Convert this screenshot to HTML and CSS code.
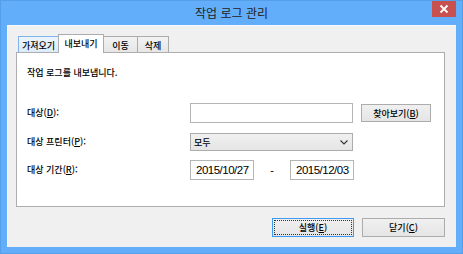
FILE: index.html
```html
<!DOCTYPE html>
<html lang="ko">
<head>
<meta charset="utf-8">
<title>작업 로그 관리</title>
<link rel="stylesheet" href="styles.css">
</head>
<body>
<div class="window">
  <div class="titlebar">
    <span class="title">작업 로그 관리</span>
    <div class="close"><svg width="10" height="10" viewBox="0 0 10 10"><path d="M1.5 1.5 L8.5 8.5 M8.5 1.5 L1.5 8.5" stroke="#fff" stroke-width="1.8" fill="none"/></svg></div>
  </div>
  <div class="client">
    <div class="tabs">
      <div class="tab hover t1">가져오기</div>
      <div class="tab sel t2">내보내기</div>
      <div class="tab t3">이동</div>
      <div class="tab t4">삭제</div>
    </div>
    <div class="panel">
      <div class="intro">작업 로그를 내보냅니다.</div>
      <div class="row row-d">
        <div class="label">대상(<u>D</u>):</div>
        <div class="field">
          <div class="textbox wide"></div>
          <div class="btn browse">찾아보기(<u>B</u>)</div>
        </div>
      </div>
      <div class="row row-p">
        <div class="label">대상 프린터(<u>P</u>):</div>
        <div class="field">
          <div class="combo"><span>모두</span><svg width="8" height="5" viewBox="0 0 8 5"><path d="M0.5 0.5 L4 4 L7.5 0.5" stroke="#333" stroke-width="1.1" fill="none"/></svg></div>
        </div>
      </div>
      <div class="row row-r">
        <div class="label">대상 기간(<u>R</u>):</div>
        <div class="field">
          <div class="textbox date">2015/10/27</div>
          <div class="dash">-</div>
          <div class="textbox date">2015/12/03</div>
        </div>
      </div>
    </div>
    <div class="actions">
      <div class="btn action default">실행(<u>E</u>)</div>
      <div class="btn action">닫기(<u>C</u>)</div>
    </div>
  </div>
</div>
</body>
</html>
```

FILE: styles.css
```css
* { box-sizing: border-box; }
html, body { margin: 0; padding: 0; background: #fff; }
body {
  font-family: "Noto Sans CJK KR", "Noto Sans", sans-serif;
  font-size: 9px;
  font-weight: 500;
  color: #000;
}
.window {
  width: 463px;
  height: 254px;
  background: #62aefa;
  box-shadow: inset 0 0 0 1px #559fe8;
  display: flex;
  flex-direction: column;
}
.titlebar {
  height: 25px;
  display: grid;
  grid-template-columns: 1fr auto 1fr;
}
.title {
  grid-column: 2;
  font-size: 12px;
  font-weight: 400;
  line-height: 25px;
  color: #222;
}
.close {
  grid-column: 3;
  justify-self: end;
  margin-top: 1px;
  margin-right: 7px;
  width: 24px;
  height: 16px;
  background: #c8504f;
  display: flex;
  align-items: center;
  justify-content: center;
}
.client {
  margin: 0 7px 7px 7px;
  flex: 1;
  background: #f0f0f0;
  border-top: 1px solid #f7f9fc;
  border-left: 1px solid #f7f9fc;
  padding: 8px 11px 0 8px;
  display: flex;
  flex-direction: column;
}
.tabs {
  display: flex;
  align-items: flex-end;
  height: 19px;
  margin-bottom: -1px;
  padding-left: 2px;
  position: relative;
  z-index: 1;
}
.tab {
  height: 16px;
  margin-bottom: 1px;
  border: 1px solid #acacac;
  border-bottom: none;
  background: linear-gradient(#f2f2f2, #e6e6e6);
  display: flex;
  align-items: center;
  justify-content: center;
  line-height: 1;
  padding-top: 1px;
}
.tab + .tab { margin-left: -1px; }
.t1 { width: 41px; }
.t2 { width: 46px; }
.t3 { width: 35px; }
.t4 { width: 32px; }
.tab.hover {
  background: linear-gradient(#ecf4fc, #dcecfc);
  border-color: #7eb4ea;
}
.tab.sel {
  height: 19px;
  margin-bottom: 0;
  background: #fff;
  padding-bottom: 2px;
  position: relative;
  z-index: 2;
}
.panel {
  height: 155px;
  background: #fff;
  border: 1px solid #adadad;
  padding: 13px 0 0 10px;
}
.intro { line-height: 14px; height: 14px; }
.row {
  display: flex;
  align-items: center;
}
.row-d { margin-top: 23px; height: 20px; }
.row-p { margin-top: 10px; height: 18px; }
.row-r { margin-top: 9px; height: 20px; }
.label {
  width: 163px;
  line-height: 12px;
}
.field {
  display: flex;
  align-items: center;
}
.textbox {
  height: 20px;
  border: 1px solid #b5b5b5;
  background: #fff;
}
.wide { width: 163px; }
.btn {
  border: 1px solid #acacac;
  background: linear-gradient(#f0f0f0, #e5e5e5);
  display: flex;
  align-items: center;
  justify-content: center;
  line-height: 1;
}
.browse {
  width: 70px;
  height: 18px;
  margin-left: 8px;
}
.combo {
  width: 163px;
  height: 18px;
  border: 1px solid #acacac;
  background: linear-gradient(#f0f0f0, #e5e5e5);
  display: flex;
  align-items: center;
  justify-content: space-between;
  padding: 0 4px 0 3px;
}
.date {
  width: 64px;
  font-family: "Liberation Sans", Arial, sans-serif;
  font-size: 11.5px;
  font-weight: 400;
  letter-spacing: -0.5px;
  line-height: 18px;
  padding-left: 5px;
}
.dash {
  width: 36px;
  text-align: center;
  font-family: "Liberation Sans", Arial, sans-serif;
  font-size: 11px;
  font-weight: 400;
}
.actions {
  margin-top: 11px;
  display: flex;
  justify-content: flex-end;
  gap: 8px;
}
.action {
  width: 83px;
  height: 19px;
}
.default {
  width: 82px;
  border-color: #3c9bf0;
  outline: 1px dotted #333;
  outline-offset: -3px;
}
```
